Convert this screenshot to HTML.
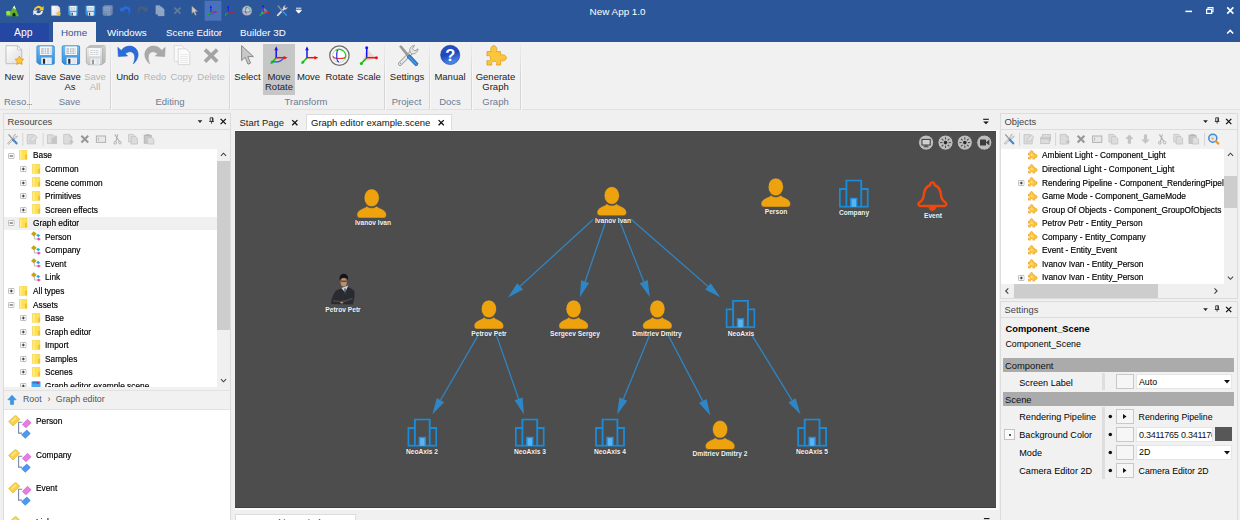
<!DOCTYPE html><html><head><meta charset="utf-8"><title>New App 1.0</title><style>
*{box-sizing:border-box;margin:0;padding:0}
html,body{width:1240px;height:520px;overflow:hidden;background:#f0f0f0;font-family:"Liberation Sans",sans-serif;font-size:9.6px;color:#1e1e1e}
.a{position:absolute}
.t{position:absolute;white-space:pre;line-height:1}
#title{left:0;top:0;width:1240px;height:42px;background:#2b579a}
#ribbon{left:0;top:42px;width:1240px;height:68px;background:#f1f1f1;border-bottom:1px solid #e2e2e2}
.rt{position:absolute;top:28px;color:#fff;font-size:9.8px;white-space:pre;line-height:1}
.rb{position:absolute;font-size:9.5px;color:#222;text-align:center;white-space:pre;line-height:10.2px;top:71.7px;transform:translateX(-50%)}
.rb.d{color:#b4b4b4}
.rg{position:absolute;font-size:9.5px;color:#6a7b94;white-space:pre;line-height:1;top:96.5px;transform:translateX(-50%)}
.sep{position:absolute;top:44px;height:66px;width:2.2px;background:linear-gradient(90deg,#d4d6d9 0,#d4d6d9 55%,#f8f8f8 55%);-webkit-mask-image:linear-gradient(180deg,rgba(0,0,0,0.15) 0,#000 45%);mask-image:linear-gradient(180deg,rgba(0,0,0,0.15) 0,#000 45%)}
.panel{position:absolute;background:#f1f1f1;border:1px solid #dcdcdc}
.ph{position:absolute;left:0;top:0;right:0;height:16px;border-bottom:1px solid #dcdcdc;background:#f1f1f1}
.ph .t{left:3.5px;top:2.9px;font-size:9.4px;color:#444}
.tree{position:absolute;background:#fff}
.tr{position:absolute;font-size:9px;white-space:pre;line-height:1;color:#000;-webkit-text-stroke:0.18px #000;transform:scaleX(0.922);transform-origin:0 0}
.pl{position:absolute;font-size:9px;white-space:pre;line-height:1;color:#111}
.nl{position:absolute;font-size:7.25px;color:#f4f4f4;white-space:pre;line-height:1;transform:translateX(-50%) scaleX(0.915);font-weight:bold;text-shadow:0 0 1.2px #333}
svg{position:absolute;overflow:visible}
</style></head><body>
<svg width="0" height="0" style="position:absolute"><defs>
<symbol id="person" viewBox="0 0 30 29.5"><path d="M0.2 26.2 C0.2 22.4 4.4 20.4 8.2 18.9 Q9.5 18.4 9.9 17.2 C12.4 19.8 17.6 19.8 20.1 17.2 Q20.5 18.4 21.8 18.9 C25.6 20.4 29.8 22.4 29.8 26.2 Q29.8 29.3 26.6 29.3 H3.4 Q0.2 29.3 0.2 26.2Z" fill="#eda20e" stroke="#454a58" stroke-width="0.5"/><ellipse cx="15" cy="9.1" rx="7.7" ry="9" fill="#eda20e" stroke="#454a58" stroke-width="0.7"/></symbol>
<symbol id="company" viewBox="0 0 30 28.4"><g fill="none" stroke="#1a8bd8" stroke-width="1.9"><rect x="7.6" y="1" width="14.8" height="26.4"/><path d="M7.6 9.6H1V27.4H7.6M22.4 9.6H29V27.4H22.4"/></g><rect x="11.3" y="18.4" width="7.4" height="9" fill="#2590e0"/><rect x="12.8" y="19.8" width="4.4" height="7.6" fill="#5ab4f0"/></symbol>
<symbol id="folder" viewBox="0 0 8.4 9.8"><path d="M0.3 0.3H8.1V9.5H0.3Z" fill="#ffe254" stroke="#f0c63a" stroke-width="0.5"/><path d="M1 0.8H2.6V9H1Z" fill="#ffee8c"/><path d="M6 5.3L8.1 4.3V9.5H6Z" fill="#f2c12e"/></symbol>
<symbol id="plus" viewBox="0 0 6.6 6"><rect x="0.4" y="0.4" width="5.8" height="5.2" rx="1" fill="#fff" stroke="#a4a4a4" stroke-width="0.8"/><path d="M1.8 3H4.8M3.3 1.6V4.4" stroke="#222" stroke-width="0.9"/></symbol>
<symbol id="minus" viewBox="0 0 6.6 6"><rect x="0.4" y="0.4" width="5.8" height="5.2" rx="1" fill="#fff" stroke="#a4a4a4" stroke-width="0.8"/><path d="M1.7 3H4.9" stroke="#222" stroke-width="0.9"/></symbol>
<symbol id="ctype" viewBox="0 0 10 10"><path d="M3.4 4.6V8H6" fill="none" stroke="#a0a0a8" stroke-width="0.7"/><path d="M0 3L2.7 0.2L5.7 2.7L3 5.6Z" fill="#c9a214"/><path d="M5.2 4.6L7 2.8L9.2 4.4L7.4 6.2Z" fill="#22aee6"/><path d="M5.7 8.1L7.6 6.5L9.8 8L7.8 9.7Z" fill="#e64cb0"/></symbol>
<symbol id="ctypeL" viewBox="0 0 24 24"><path d="M10.2 7.3H14.3M10.6 7.3V18.1H14" fill="none" stroke="#7888a8" stroke-width="1.1"/><path d="M0.65 6.4L7.6 0.2L11.9 4.3L5 11Z" fill="#f8d242" stroke="#dcaa24" stroke-width="0.6"/><path d="M3 6.2L7.4 2.2L8.6 3.4L4.2 7.4Z" fill="#fce68a"/><path d="M14.3 9.5L19.5 4.3L23.1 7.7L18 12.7Z" fill="#e97ce2" stroke="#cc54c4" stroke-width="0.6"/><path d="M13.6 19.8L18.8 15.1L22.3 18.5L17.3 23.3Z" fill="#4a9af2" stroke="#2c78d8" stroke-width="0.6"/></symbol>
<symbol id="star" viewBox="486 44.8 21 20.8"><path d="M487 51.6H491.4C490.2 50.2 490.4 46.2 493.8 45.6C497.2 46.2 497.4 50.2 496.2 51.6H500.6V55.4C502 54.2 506 54.4 506.4 57.8C506 61.2 502 61.4 500.6 60.2V65H496.4C497.4 63.6 496.8 61.2 494.2 61.2C491.6 61.2 491 63.6 492 65H487V60.4C488.4 61.4 490.6 60.8 490.6 58.2C490.6 55.6 488.4 55 487 56Z" fill="#ffcb30" stroke="#e8a23c" stroke-width="1.8" stroke-linejoin="round"/><circle cx="494" cy="55.5" r="2.6" fill="#ffe070"/></symbol>
</defs></svg>
<div class="a" id="title"></div>
<div class="a" style="left:0;top:22.6px;width:49px;height:19.4px;background:#2347a3"></div>
<div class="a" style="left:53px;top:22px;width:43px;height:21px;background:#f1f1f1"></div>
<div class="t" style="left:589.6px;top:7px;font-size:9.9px;color:#fff">New App 1.0</div>
<div class="rt" style="left:14px;color:#fff;font-size:10.4px;top:28px">App</div>
<div class="rt" style="left:61px;color:#2b579a">Home</div>
<div class="rt" style="left:107px;color:#fff">Windows</div>
<div class="rt" style="left:166px;color:#fff">Scene Editor</div>
<div class="rt" style="left:240px;color:#fff">Builder 3D</div>
<div class="a" id="ribbon"></div>
<div class="a" style="left:263px;top:44px;width:32px;height:51px;background:#c6c6c6"></div>
<div class="sep" style="left:29.3px"></div>
<div class="sep" style="left:110px"></div>
<div class="sep" style="left:229.3px"></div>
<div class="sep" style="left:384.3px"></div>
<div class="sep" style="left:429px"></div>
<div class="sep" style="left:471px"></div>
<div class="sep" style="left:520px"></div>
<div class="rb" style="left:14px">New</div>
<div class="rb" style="left:45.5px">Save</div>
<div class="rb" style="left:70px">Save
As</div>
<div class="rb d" style="left:95px">Save
All</div>
<div class="rb" style="left:127.5px">Undo</div>
<div class="rb d" style="left:155px">Redo</div>
<div class="rb d" style="left:181.5px">Copy</div>
<div class="rb d" style="left:211px">Delete</div>
<div class="rb" style="left:247.5px">Select</div>
<div class="rb" style="left:279px">Move
Rotate</div>
<div class="rb" style="left:308.5px">Move</div>
<div class="rb" style="left:339.5px">Rotate</div>
<div class="rb" style="left:369px">Scale</div>
<div class="rb" style="left:407px">Settings</div>
<div class="rb" style="left:450px">Manual</div>
<div class="rb" style="left:495.5px">Generate
Graph</div>
<div class="rg" style="left:4px;transform:none">Reso<span style="letter-spacing:-0.9px">...</span></div>
<div class="rg" style="left:69.5px">Save</div>
<div class="rg" style="left:170px">Editing</div>
<div class="rg" style="left:306px">Transform</div>
<div class="rg" style="left:406.5px">Project</div>
<div class="rg" style="left:450px">Docs</div>
<div class="rg" style="left:495.5px">Graph</div>
<div class="panel" style="left:3px;top:113px;width:228px;height:410px"><div class="ph"><div class="t">Resources</div></div></div>
<div class="tree" style="left:4px;top:148.5px;width:226px;height:238.5px"></div>
<div class="a" style="left:4px;top:216.5px;width:213px;height:13.5px;background:#f0f0f0"></div>
<div class="a" style="left:217px;top:148.5px;width:13px;height:238.5px;background:#f0f0f0"></div>
<div class="a" style="left:217px;top:161px;width:13px;height:169px;background:#cdcdcd"></div>
<div class="a" style="left:4px;top:148px;width:213px;height:239px;overflow:hidden">
<svg style="left:4.1px;top:4.5px" width="6.6" height="6"><use href="#minus"/></svg>
<svg style="left:15.3px;top:2.0999999999999996px" width="8.4" height="9.8"><use href="#folder"/></svg>
<div class="tr" style="left:29.1px;top:3.4000000000000004px">Base</div>
<svg style="left:16.35px;top:18.060000000000002px" width="6.6" height="6"><use href="#plus"/></svg>
<svg style="left:27.55px;top:15.660000000000002px" width="8.4" height="9.8"><use href="#folder"/></svg>
<div class="tr" style="left:41.35px;top:16.96px">Common</div>
<svg style="left:16.35px;top:31.620000000000005px" width="6.6" height="6"><use href="#plus"/></svg>
<svg style="left:27.55px;top:29.220000000000006px" width="8.4" height="9.8"><use href="#folder"/></svg>
<div class="tr" style="left:41.35px;top:30.520000000000003px">Scene common</div>
<svg style="left:16.35px;top:45.18000000000001px" width="6.6" height="6"><use href="#plus"/></svg>
<svg style="left:27.55px;top:42.78000000000001px" width="8.4" height="9.8"><use href="#folder"/></svg>
<div class="tr" style="left:41.35px;top:44.080000000000005px">Primitives</div>
<svg style="left:16.35px;top:58.74000000000001px" width="6.6" height="6"><use href="#plus"/></svg>
<svg style="left:27.55px;top:56.34000000000001px" width="8.4" height="9.8"><use href="#folder"/></svg>
<div class="tr" style="left:41.35px;top:57.64000000000001px">Screen effects</div>
<svg style="left:4.1px;top:72.30000000000001px" width="6.6" height="6"><use href="#minus"/></svg>
<svg style="left:15.3px;top:69.9px" width="8.4" height="9.8"><use href="#folder"/></svg>
<div class="tr" style="left:29.1px;top:71.20000000000002px">Graph editor</div>
<svg style="left:27.05px;top:83.26000000000002px" width="10" height="10"><use href="#ctype"/></svg>
<div class="tr" style="left:41.35px;top:84.76000000000002px">Person</div>
<svg style="left:27.05px;top:96.82000000000002px" width="10" height="10"><use href="#ctype"/></svg>
<div class="tr" style="left:41.35px;top:98.32000000000002px">Company</div>
<svg style="left:27.05px;top:110.38000000000002px" width="10" height="10"><use href="#ctype"/></svg>
<div class="tr" style="left:41.35px;top:111.88000000000002px">Event</div>
<svg style="left:27.05px;top:123.94000000000003px" width="10" height="10"><use href="#ctype"/></svg>
<div class="tr" style="left:41.35px;top:125.44000000000003px">Link</div>
<svg style="left:4.1px;top:140.10000000000002px" width="6.6" height="6"><use href="#plus"/></svg>
<svg style="left:15.3px;top:137.70000000000002px" width="8.4" height="9.8"><use href="#folder"/></svg>
<div class="tr" style="left:29.1px;top:139.00000000000003px">All types</div>
<svg style="left:4.1px;top:153.65999999999997px" width="6.6" height="6"><use href="#minus"/></svg>
<svg style="left:15.3px;top:151.25999999999996px" width="8.4" height="9.8"><use href="#folder"/></svg>
<div class="tr" style="left:29.1px;top:152.55999999999997px">Assets</div>
<svg style="left:16.35px;top:167.22000000000003px" width="6.6" height="6"><use href="#plus"/></svg>
<svg style="left:27.55px;top:164.82000000000002px" width="8.4" height="9.8"><use href="#folder"/></svg>
<div class="tr" style="left:41.35px;top:166.12000000000003px">Base</div>
<svg style="left:16.35px;top:180.77999999999997px" width="6.6" height="6"><use href="#plus"/></svg>
<svg style="left:27.55px;top:178.37999999999997px" width="8.4" height="9.8"><use href="#folder"/></svg>
<div class="tr" style="left:41.35px;top:179.67999999999998px">Graph editor</div>
<svg style="left:16.35px;top:194.34000000000003px" width="6.6" height="6"><use href="#plus"/></svg>
<svg style="left:27.55px;top:191.94000000000003px" width="8.4" height="9.8"><use href="#folder"/></svg>
<div class="tr" style="left:41.35px;top:193.24000000000004px">Import</div>
<svg style="left:16.35px;top:207.89999999999998px" width="6.6" height="6"><use href="#plus"/></svg>
<svg style="left:27.55px;top:205.49999999999997px" width="8.4" height="9.8"><use href="#folder"/></svg>
<div class="tr" style="left:41.35px;top:206.79999999999998px">Samples</div>
<svg style="left:16.35px;top:221.46000000000004px" width="6.6" height="6"><use href="#plus"/></svg>
<svg style="left:27.55px;top:219.06000000000003px" width="8.4" height="9.8"><use href="#folder"/></svg>
<div class="tr" style="left:41.35px;top:220.36000000000004px">Scenes</div>
<svg style="left:16.35px;top:235.01999999999998px" width="6.6" height="6"><use href="#plus"/></svg>
<svg style="left:27.05px;top:233.01999999999998px" width="10" height="10"><rect x="0.5" y="0.5" width="9" height="8.5" fill="#4aa8f0"/><rect x="1.5" y="0.5" width="7" height="2" fill="#2a78d0"/><rect x="6" y="1" width="2" height="2" fill="#e03030"/></svg>
<div class="tr" style="left:41.35px;top:233.92px">Graph editor example.scene</div>
</div>
<div class="a" style="left:4px;top:390px;width:226px;height:20px;background:#f1f1f1;border-top:1px solid #e2e2e2;border-bottom:1px solid #e2e2e2"></div>
<div class="t" style="left:23px;top:395.4px;font-size:8.8px;color:#555">Root</div><div class="t" style="left:47.5px;top:395.4px;font-size:8.8px;color:#555">›</div><div class="t" style="left:55.8px;top:395.4px;font-size:8.8px;color:#555">Graph editor</div>
<div class="a" style="left:4px;top:410px;width:226px;height:110px;background:#fff"></div>
<svg style="left:8px;top:415.0px" width="24" height="24"><use href="#ctypeL"/></svg>
<div class="tr" style="left:36.3px;top:416.9px">Person</div>
<svg style="left:8px;top:448.6px" width="24" height="24"><use href="#ctypeL"/></svg>
<div class="tr" style="left:36.3px;top:450.5px">Company</div>
<svg style="left:8px;top:482.2px" width="24" height="24"><use href="#ctypeL"/></svg>
<div class="tr" style="left:36.3px;top:484.09999999999997px">Event</div>
<svg style="left:8px;top:515.8px" width="24" height="24"><use href="#ctypeL"/></svg>
<div class="tr" style="left:36.3px;top:517.6999999999999px">Link</div>
<div class="a" style="left:306px;top:114px;width:146px;height:17px;background:#fff;border:1px solid #dcdcdc;border-bottom:none"></div>
<div class="t" style="left:239.6px;top:118.4px;font-size:9.4px;color:#222">Start Page</div>
<div class="t" style="left:311px;top:118.4px;font-size:9.5px;color:#111">Graph editor example.scene</div>
<div class="a" style="left:235px;top:130px;width:764px;height:379.5px;background:#fbfbfb"></div>
<div class="a" id="canvas" style="left:235px;top:131px;width:761px;height:377px;background:#4d4d4d"></div>
<div class="a" style="left:235px;top:513.5px;width:121px;height:10px;background:#fff;border:1px solid #dcdcdc"></div>
<div class="t" style="left:239.6px;top:517.8px;font-size:9.6px;color:#111">New Docking Window M...</div>
<div class="panel" style="left:1000px;top:113px;width:238px;height:186px"><div class="ph"><div class="t">Objects</div></div></div>
<div class="tree" style="left:1001px;top:148.5px;width:236px;height:135.5px"></div>
<div class="a" style="left:1224px;top:148.5px;width:13px;height:135.5px;background:#f0f0f0"></div>
<div class="a" style="left:1224px;top:176px;width:13px;height:32px;background:#cdcdcd"></div>
<div class="a" style="left:1001px;top:284px;width:236px;height:14px;background:#f0f0f0"></div>
<div class="a" style="left:1013.5px;top:284px;width:144.5px;height:14px;background:#cdcdcd"></div>
<div class="a" style="left:1001px;top:148px;width:223px;height:136px;overflow:hidden">
<svg style="left:27px;top:2.0999999999999996px" width="9.6" height="9.6"><use href="#star"/></svg>
<div class="tr" style="left:41px;top:3.4000000000000004px">Ambient Light - Component_Light</div>
<svg style="left:27px;top:15.660000000000002px" width="9.6" height="9.6"><use href="#star"/></svg>
<div class="tr" style="left:41px;top:16.96px">Directional Light - Component_Light</div>
<svg style="left:17.2px;top:31.620000000000005px" width="6.6" height="6"><use href="#plus"/></svg>
<svg style="left:27px;top:29.220000000000006px" width="9.6" height="9.6"><use href="#star"/></svg>
<div class="tr" style="left:41px;top:30.520000000000003px">Rendering Pipeline - Component_RenderingPipeline</div>
<svg style="left:27px;top:42.78000000000001px" width="9.6" height="9.6"><use href="#star"/></svg>
<div class="tr" style="left:41px;top:44.080000000000005px">Game Mode - Component_GameMode</div>
<svg style="left:27px;top:56.34000000000001px" width="9.6" height="9.6"><use href="#star"/></svg>
<div class="tr" style="left:41px;top:57.64000000000001px">Group Of Objects - Component_GroupOfObjects</div>
<svg style="left:27px;top:69.9px" width="9.6" height="9.6"><use href="#star"/></svg>
<div class="tr" style="left:41px;top:71.20000000000002px">Petrov Petr - Entity_Person</div>
<svg style="left:27px;top:83.46000000000001px" width="9.6" height="9.6"><use href="#star"/></svg>
<div class="tr" style="left:41px;top:84.76000000000002px">Company - Entity_Company</div>
<svg style="left:27px;top:97.02000000000001px" width="9.6" height="9.6"><use href="#star"/></svg>
<div class="tr" style="left:41px;top:98.32000000000002px">Event - Entity_Event</div>
<svg style="left:27px;top:110.58000000000001px" width="9.6" height="9.6"><use href="#star"/></svg>
<div class="tr" style="left:41px;top:111.88000000000002px">Ivanov Ivan - Entity_Person</div>
<svg style="left:17.2px;top:126.54000000000002px" width="6.6" height="6"><use href="#plus"/></svg>
<svg style="left:27px;top:124.14000000000001px" width="9.6" height="9.6"><use href="#star"/></svg>
<div class="tr" style="left:41px;top:125.44000000000003px">Ivanov Ivan - Entity_Person</div>
</div>
<div class="panel" style="left:1000px;top:301px;width:238px;height:222px"><div class="ph"><div class="t">Settings</div></div></div>
<div class="t" style="left:1005.5px;top:325px;font-size:9.3px;font-weight:bold;color:#000">Component_Scene</div>
<div class="t" style="left:1005.5px;top:340.3px;font-size:8.8px;color:#000">Component_Scene</div>
<div class="a" style="left:1003px;top:358px;width:231px;height:13.5px;background:#ababab"></div>
<div class="t" style="left:1005px;top:360.5px;font-size:9.4px;color:#111">Component</div>
<div class="a" style="left:1003px;top:392px;width:231px;height:13.5px;background:#ababab"></div>
<div class="t" style="left:1005px;top:394.5px;font-size:9.4px;color:#111">Scene</div>
<div class="a" style="left:1102px;top:373px;width:3px;height:17px;background:#dedede"></div>
<div class="a" style="left:1102px;top:407px;width:3px;height:72px;background:#dedede"></div>
<div class="t" style="left:1019.3px;top:378.7px;font-size:9.1px;color:#000">Screen Label</div>
<div class="a" style="left:1116px;top:374.0px;width:18px;height:15px;background:#f6f6f6;border:1px solid #c8c8c8"></div>
<div class="a" style="left:1136px;top:374.0px;width:96px;height:15px;background:#fff;border:1px solid #e6e6e6"></div>
<div class="t" style="left:1139px;top:377.7px;font-size:8.8px;color:#000">Auto</div>
<svg style="left:1224px;top:380.0px" width="6" height="4"><path d="M0 0H6L3 3.4Z" fill="#111"/></svg>
<div class="t" style="left:1019.3px;top:412.9px;font-size:9.1px;color:#000">Rendering Pipeline</div>
<svg style="left:1106px;top:412.5px" width="8" height="8"><circle cx="4.3" cy="3.4" r="1.75" fill="#111"/></svg>
<div class="a" style="left:1116px;top:409.0px;width:18px;height:15px;background:#f6f6f6;border:1px solid #c8c8c8"></div>
<svg style="left:1123px;top:414.0px" width="4" height="5"><path d="M0 0L3.5 2.5L0 5Z" fill="#111"/></svg>
<div class="t" style="left:1138.6px;top:413.0px;font-size:8.75px;color:#000">Rendering Pipeline</div>
<div class="t" style="left:1019.3px;top:431.09999999999997px;font-size:9.1px;color:#000">Background Color</div>
<svg style="left:1106px;top:430.7px" width="8" height="8"><circle cx="4.3" cy="3.4" r="1.75" fill="#111"/></svg>
<div class="a" style="left:1004px;top:429.2px;width:11px;height:11px;background:#fafafa;border:1px solid #c4c4c4"></div><div class="a" style="left:1008.7px;top:433.9px;width:2px;height:2px;border-radius:1px;background:#222"></div>
<div class="a" style="left:1116px;top:427.2px;width:18px;height:15px;background:#f6f6f6;border:1px solid #c8c8c8"></div>
<div class="a" style="left:1136px;top:427.2px;width:77px;height:15px;background:#fff;border:1px solid #e6e6e6;overflow:hidden"><div class="t" style="left:2px;top:2.5px;font-size:9px;color:#111;letter-spacing:-0.25px">0.3411765 0.3411765 0.3411765</div></div>
<div class="a" style="left:1215px;top:427.2px;width:17px;height:14px;background:#575757"></div>
<div class="t" style="left:1019.3px;top:449.2px;font-size:9.1px;color:#000">Mode</div>
<svg style="left:1106px;top:448.8px" width="8" height="8"><circle cx="4.3" cy="3.4" r="1.75" fill="#111"/></svg>
<div class="a" style="left:1116px;top:445.3px;width:18px;height:15px;background:#f6f6f6;border:1px solid #c8c8c8"></div>
<div class="a" style="left:1136px;top:445.3px;width:96px;height:15px;background:#fff;border:1px solid #e6e6e6"></div>
<div class="t" style="left:1139px;top:448.2px;font-size:8.8px;color:#000">2D</div>
<svg style="left:1224px;top:451.3px" width="6" height="4"><path d="M0 0H6L3 3.4Z" fill="#111"/></svg>
<div class="t" style="left:1019.3px;top:466.9px;font-size:9.1px;color:#000">Camera Editor 2D</div>
<svg style="left:1106px;top:466.5px" width="8" height="8"><circle cx="4.3" cy="3.4" r="1.75" fill="#111"/></svg>
<div class="a" style="left:1116px;top:463.0px;width:18px;height:15px;background:#f6f6f6;border:1px solid #c8c8c8"></div>
<svg style="left:1123px;top:468.0px" width="4" height="5"><path d="M0 0L3.5 2.5L0 5Z" fill="#111"/></svg>
<div class="t" style="left:1138.6px;top:467.0px;font-size:8.75px;color:#000">Camera Editor 2D</div>
<svg style="left:0;top:0" width="1240" height="520" viewBox="0 0 1240 520"><defs>
<linearGradient id="fgb" x1="0" y1="0" x2="0" y2="1"><stop offset="0" stop-color="#78bef2"/><stop offset="1" stop-color="#2e8cda"/></linearGradient>
<linearGradient id="fgg" x1="0" y1="0" x2="0" y2="1"><stop offset="0" stop-color="#ececec"/><stop offset="1" stop-color="#c6c6c6"/></linearGradient>
<linearGradient id="pg" x1="0" y1="0" x2="1" y2="1"><stop offset="0" stop-color="#ffffff"/><stop offset="1" stop-color="#dcdcdc"/></linearGradient>
<linearGradient id="hg" x1="0" y1="0" x2="0.3" y2="1"><stop offset="0" stop-color="#2a52c4"/><stop offset="0.55" stop-color="#1f48bc"/><stop offset="1" stop-color="#4a8ae8"/></linearGradient>
</defs>
<g id="i-new">
<path d="M6 45.7H17.6L21.8 49.9V63.7H6Z" fill="url(#pg)" stroke="#b4b4b4" stroke-width="0.8"/><path d="M17.6 45.7V49.9H21.8Z" fill="#fafafa" stroke="#b4b4b4" stroke-width="0.7"/>
<path d="M19.40 56.10L20.75 58.84L23.77 59.28L21.59 61.41L22.10 64.42L19.40 63.00L16.70 64.42L17.21 61.41L15.03 59.28L18.05 58.84Z" fill="#fbc935" stroke="#e79a1c" stroke-width="0.8" stroke-linejoin="round"/>
</g>
<g id="i-save"><g transform="translate(36.5,45.4) scale(1.0)"><path d="M1.6 0.4 H16.6 Q17.8 0.4 17.8 1.6 V17.6 Q17.8 18.8 16.6 18.8 H2.4 L0.4 16.8 V1.6 Q0.4 0.4 1.6 0.4Z" fill="url(#fgb)" stroke="#2a80cc" stroke-width="0.8"/><rect x="3.4" y="1" width="11.8" height="8.6" fill="#f6f9fc"/><path d="M4.6 3.6H14M4.6 5.7H14M4.6 7.8H14" stroke="#707880" stroke-width="0.7" stroke-dasharray="2.6 0.9 1.7 0.7 2.2 0.8"/><rect x="4.8" y="12.2" width="10.4" height="6.4" fill="#eef2f6"/><rect x="6.4" y="13.4" width="2.2" height="5" fill="#2a2a2a"/><rect x="10.6" y="13" width="3.4" height="5.4" fill="#dfe6ee"/></g></g>
<g transform="translate(61.8,45.4) scale(1.0)"><path d="M1.6 0.4 H16.6 Q17.8 0.4 17.8 1.6 V17.6 Q17.8 18.8 16.6 18.8 H2.4 L0.4 16.8 V1.6 Q0.4 0.4 1.6 0.4Z" fill="url(#fgb)" stroke="#2a80cc" stroke-width="0.8"/><rect x="3.4" y="1" width="11.8" height="8.6" fill="#f6f9fc"/><path d="M4.6 3.6H14M4.6 5.7H14M4.6 7.8H14" stroke="#707880" stroke-width="0.7" stroke-dasharray="2.6 0.9 1.7 0.7 2.2 0.8"/><rect x="4.8" y="12.2" width="10.4" height="6.4" fill="#eef2f6"/><rect x="6.4" y="13.4" width="2.2" height="5" fill="#2a2a2a"/><rect x="10.6" y="13" width="3.4" height="5.4" fill="#dfe6ee"/></g>
<g id="i-saveall"><g transform="translate(88.6,45.2) scale(0.93)"><path d="M1.6 0.4 H16.6 Q17.8 0.4 17.8 1.6 V17.6 Q17.8 18.8 16.6 18.8 H2.4 L0.4 16.8 V1.6 Q0.4 0.4 1.6 0.4Z" fill="url(#fgg)" stroke="#a8a8a8" stroke-width="0.8"/><rect x="3.4" y="1" width="11.8" height="8.6" fill="#f6f9fc"/><path d="M4.6 3.6H14M4.6 5.7H14M4.6 7.8H14" stroke="#b8b8b8" stroke-width="0.7" stroke-dasharray="2.6 0.9 1.7 0.7 2.2 0.8"/><rect x="4.8" y="12.2" width="10.4" height="6.4" fill="#eef2f6"/><rect x="6.4" y="13.4" width="2.2" height="5" fill="#9a9a9a"/><rect x="10.6" y="13" width="3.4" height="5.4" fill="#dfe6ee"/></g><g transform="translate(87.3,46.2) scale(0.93)"><path d="M1.6 0.4 H16.6 Q17.8 0.4 17.8 1.6 V17.6 Q17.8 18.8 16.6 18.8 H2.4 L0.4 16.8 V1.6 Q0.4 0.4 1.6 0.4Z" fill="url(#fgg)" stroke="#a8a8a8" stroke-width="0.8"/><rect x="3.4" y="1" width="11.8" height="8.6" fill="#f6f9fc"/><path d="M4.6 3.6H14M4.6 5.7H14M4.6 7.8H14" stroke="#b8b8b8" stroke-width="0.7" stroke-dasharray="2.6 0.9 1.7 0.7 2.2 0.8"/><rect x="4.8" y="12.2" width="10.4" height="6.4" fill="#eef2f6"/><rect x="6.4" y="13.4" width="2.2" height="5" fill="#9a9a9a"/><rect x="10.6" y="13" width="3.4" height="5.4" fill="#dfe6ee"/></g><g transform="translate(86,47.2) scale(0.93)"><path d="M1.6 0.4 H16.6 Q17.8 0.4 17.8 1.6 V17.6 Q17.8 18.8 16.6 18.8 H2.4 L0.4 16.8 V1.6 Q0.4 0.4 1.6 0.4Z" fill="url(#fgg)" stroke="#a8a8a8" stroke-width="0.8"/><rect x="3.4" y="1" width="11.8" height="8.6" fill="#f6f9fc"/><path d="M4.6 3.6H14M4.6 5.7H14M4.6 7.8H14" stroke="#b8b8b8" stroke-width="0.7" stroke-dasharray="2.6 0.9 1.7 0.7 2.2 0.8"/><rect x="4.8" y="12.2" width="10.4" height="6.4" fill="#eef2f6"/><rect x="6.4" y="13.4" width="2.2" height="5" fill="#9a9a9a"/><rect x="10.6" y="13" width="3.4" height="5.4" fill="#dfe6ee"/></g></g>
<path id="i-undo" d="M117.8 47.3L121.2 50.4C124 46.6 129 45.3 132.6 46.6C137.2 48.4 139.2 53.2 137.6 57.8C136.7 60.4 135.1 62.4 133.3 63.9C134.7 60.6 135.1 57.6 134.4 55.1C133.4 51.6 129.4 50.4 125.4 53.8L127.6 56L118.3 56.6Z" fill="#2c6cd8" stroke="#2458c0" stroke-width="0.5"/>
<path d="M117.8 47.3L121.2 50.4C124 46.6 129 45.3 132.6 46.6C137.2 48.4 139.2 53.2 137.6 57.8C136.7 60.4 135.1 62.4 133.3 63.9C134.7 60.6 135.1 57.6 134.4 55.1C133.4 51.6 129.4 50.4 125.4 53.8L127.6 56L118.3 56.6Z" fill="#a9a9a9" stroke="#9a9a9a" stroke-width="0.5" transform="translate(283,0) scale(-1,1)"/>
<g id="i-copy">
<path d="M174.3 45.6H181.6L185.4 49.2V61.4H174.3Z" fill="#fafafa" stroke="#d4d4d4" stroke-width="0.8"/>
<path d="M178.2 48.8H185.8L189.8 52.6V64.6H178.2Z" fill="#fbfbfb" stroke="#d0d0d0" stroke-width="0.8"/><path d="M180 54.5H188M180 56.5H188M180 58.5H188M180 60.5H188M180 62.5H188" stroke="#e2e2e2" stroke-width="0.7"/>
</g>
<path id="i-del" d="M205 49.6L217.2 61.6M217.2 49.6L205 61.6" stroke="#a4a4a4" stroke-width="3.6"/>
<path id="i-sel" d="M241.6 45.6V60.6L245.2 57.4L248 64.2L250.6 63.1L247.8 56.6H253.4Z" fill="#c8c8c8" stroke="#808080" stroke-width="0.9" stroke-linejoin="round"/>
<g id="i-mr"><path d="M276.2 57.7L271.5 62.8" stroke="#0cc00c" stroke-width="1.5"/><path d="M276.2 58.1V48.7" stroke="#1414f0" stroke-width="1.5"/><path d="M275.8 57.7H285.2" stroke="#f01010" stroke-width="1.5"/><path d="M276.2 46.300000000000004L278.0 50.300000000000004H274.4Z" fill="#1414f0"/><path d="M287.59999999999997 57.7L283.59999999999997 55.900000000000006V59.5Z" fill="#f01010"/><path d="M270.3 64.1L271.2 60.5L273.9 63.0Z" fill="#0cc00c"/><path d="M272.8 61.5Q279.2 63.300000000000004 283.4 58.300000000000004" stroke="#2a50e8" stroke-width="1.2" fill="none"/></g>
<g id="i-mv"><path d="M307 57.7L302.3 62.8" stroke="#0cc00c" stroke-width="1.5"/><path d="M307 58.1V48.7" stroke="#1414f0" stroke-width="1.5"/><path d="M306.6 57.7H316" stroke="#f01010" stroke-width="1.5"/><path d="M307 46.300000000000004L308.8 50.300000000000004H305.2Z" fill="#1414f0"/><path d="M318.4 57.7L314.4 55.900000000000006V59.5Z" fill="#f01010"/><path d="M301.1 64.1L302.0 60.5L304.7 63.0Z" fill="#0cc00c"/></g>
<g id="i-rot">
<circle cx="339.4" cy="55.6" r="9.7" fill="#f7f7f7" stroke="#6e6e6e" stroke-width="1.3"/><circle cx="339.4" cy="55.6" r="6.7" fill="#fff" stroke="#9a9a9a" stroke-width="0.5"/>
<path d="M333.09999999999997 56.2A6.3 2.3 0 0 0 345.7 56.2" fill="none" stroke="#f03030" stroke-width="1.2"/>
<path d="M339.0 49.300000000000004A2.3 6.3 0 0 0 339.0 61.9" fill="none" stroke="#3030f0" stroke-width="1.2"/>
<path d="M335.59999999999997 50.6A6.3 6.3 0 0 1 344.59999999999997 59.0" fill="none" stroke="#20d020" stroke-width="1.2"/>
</g>
<g id="i-sc"><path d="M366.7 48.7L375.7 57.7L362.09999999999997 62.7Z" fill="#f0b0b0" opacity="0.45"/><path d="M366.7 57.7L362.0 62.8" stroke="#0cc00c" stroke-width="1.5"/><path d="M366.7 58.1V48.7" stroke="#1414f0" stroke-width="1.5"/><path d="M366.3 57.7H375.7" stroke="#f01010" stroke-width="1.5"/><circle cx="366.7" cy="47.7" r="1.5" fill="#1414f0"/><circle cx="376.4" cy="57.7" r="1.5" fill="#f01010"/><circle cx="361.4" cy="63.5" r="1.5" fill="#0cc00c"/></g>
<g id="i-set">
<path d="M400 63.8L411.4 52.4" stroke="#8c8c8c" stroke-width="4" stroke-linecap="round"/><path d="M400 63.8L411.4 52.4" stroke="#e9e9e9" stroke-width="2.6" stroke-linecap="round"/>
<path d="M410.2 52.2C408.8 49 411 45.6 414.6 45.4L412.4 48.6L414.8 51L418 48.8C417.8 52.4 414.4 54.6 411.6 53.6Z" fill="#e6e6e6" stroke="#8c8c8c" stroke-width="0.8" stroke-linejoin="round"/>
<circle cx="400.6" cy="63.2" r="0.8" fill="#a0a0a0"/>
<path d="M399.4 46.6L401.2 45.6L409.4 55.2L407.6 56.8Z" fill="#9a9a9a" stroke="#7c7c7c" stroke-width="0.4"/><path d="M407 57L409.8 54.6L417.8 63.2Q418.2 65.8 415.4 65.8Z" fill="#2e7fd2" stroke="#1b58a6" stroke-width="0.6"/><path d="M408.6 56.4L416.4 64.6" stroke="#6ab0ee" stroke-width="0.8"/>
</g>
<circle cx="450.2" cy="54.9" r="9.6" fill="url(#hg)" stroke="#1a3ea0" stroke-width="0.6"/><text x="450.3" y="60.9" font-family="Liberation Sans, sans-serif" font-weight="bold" font-size="16.5" fill="#fff" text-anchor="middle">?</text>
<path d="M487 51.6H491.4C490.2 50.2 490.4 46.2 493.8 45.6C497.2 46.2 497.4 50.2 496.2 51.6H500.6V55.4C502 54.2 506 54.4 506.4 57.8C506 61.2 502 61.4 500.6 60.2V65H496.4C497.4 63.6 496.8 61.2 494.2 61.2C491.6 61.2 491 63.6 492 65H487V60.4C488.4 61.4 490.6 60.8 490.6 58.2C490.6 55.6 488.4 55 487 56Z" fill="#fac63c" stroke="#e29a22" stroke-width="0.8" stroke-linejoin="round"/>
<rect x="204.6" y="0.8" width="16.8" height="20" fill="#4a72b8"/>
<path d="M5.6 16.3L11.2 10.4L14.4 5.6L19 16.3Z" fill="#5cb424"/><path d="M12.6 8.2L14.4 5.6L16 9.4L14.4 8.6Z" fill="#f4f8f4"/><circle cx="8.2" cy="13" r="2.3" fill="#9be04a"/><path d="M12.4 16.3Q12.2 12.8 14 12.8Q15.6 12.8 15.6 16.3Z" fill="#1c1c1c"/>
<g transform="translate(38.4,10.6) scale(1.13) translate(-38.4,-10.6)"><path d="M34.2 10.2A4.3 4.3 0 0 1 41.6 7.8L43 6.4V10.6H38.8L40.3 9.1A2.5 2.5 0 0 0 36 10.2Z" fill="#f8c628"/><path d="M42.6 11A4.3 4.3 0 0 1 35.2 13.4L33.8 14.8V10.6H38L36.5 12.1A2.5 2.5 0 0 0 40.8 11Z" fill="#e4e8f0"/></g>
<use href="#i-new" transform="translate(48.20,-18.89) scale(0.54)" opacity="1" />
<use href="#i-save" transform="translate(48.38,-19.00) scale(0.54)" opacity="1" />
<use href="#i-save" transform="translate(65.78,-19.00) scale(0.54)" opacity="1" />
<use href="#i-saveall" transform="translate(57.88,-18.16) scale(0.52)" opacity="0.45" />
<use href="#i-undo" transform="translate(58.64,-17.85) scale(0.52)" opacity="1" />
<use href="#i-undo" transform="translate(209.16,-17.85) scale(-0.52,0.52)" opacity="0.5" style="filter:grayscale(1)"/>
<use href="#i-copy" transform="translate(61.72,-19.00) scale(0.54)" opacity="0.5" />
<use href="#i-del" transform="translate(71.90,-17.10) scale(0.5)" opacity="0.45" />
<use href="#i-sel" transform="translate(71.05,-16.80) scale(0.5)" opacity="1" />
<use href="#i-mr" transform="translate(50.67,-21.49) scale(0.58)" opacity="1" />
<use href="#i-mv" transform="translate(50.21,-21.49) scale(0.58)" opacity="1" />
<use href="#i-rot" transform="translate(70.51,-18.21) scale(0.52)" opacity="0.7" />
<use href="#i-sc" transform="translate(50.50,-21.49) scale(0.58)" opacity="1" />
<use href="#i-set" transform="translate(61.75,-19.27) scale(0.54)" opacity="1" />
<path d="M296 8.2H301.4M296 10.2H301.4L298.7 13.2Z" stroke="#fff" stroke-width="0.9" fill="#fff"/>
<path d="M1185.4 11.4H1192" stroke="#fff" stroke-width="1.5"/>
<path d="M1208 9V7.6H1213V11.6H1211.6" stroke="#fff" stroke-width="1.1" fill="none"/><rect x="1206.6" y="9.4" width="5" height="4" fill="none" stroke="#fff" stroke-width="1.2"/>
<path d="M1227.2 7.4L1233.4 13.6M1233.4 7.4L1227.2 13.6" stroke="#fff" stroke-width="1.6"/>
<path d="M1227.2 33.6L1230.2 30.4L1233.2 33.6" stroke="#fff" stroke-width="1.5" fill="none"/>
</svg>
<svg style="left:0;top:0" width="1240" height="520" viewBox="0 0 1240 520">
<use href="#i-set" transform="translate(-191.45,111.45) scale(0.5)"/>
<path d="M22.8 132.7V145.7" stroke="#d4d4d4" stroke-width="1"/>
<path d="M27.200000000000003 134.6H33.7L35.400000000000006 136.39999999999998V143.79999999999998H27.200000000000003Z" fill="#dcdcdc" stroke="#c2c2c2" stroke-width="0.8"/><path d="M29.800000000000004 141.79999999999998L30.6 138.79999999999998L34.800000000000004 135.0L37.2 137.6L33.0 141.39999999999998Z" fill="#e2e2e2" stroke="#c2c2c2" stroke-width="0.8"/>
<path d="M43.2 132.7V145.7" stroke="#d4d4d4" stroke-width="1"/>
<path d="M47.4 134.79999999999998H52.6L53.4 136.0H56.6V143.6H47.4Z" fill="#dcdcdc" stroke="#c2c2c2" stroke-width="0.8"/><path d="M51.4 138.2L56.6 136.2V143.6H51.4Z" fill="#c6c6c6"/>
<path d="M63.699999999999996 134.39999999999998H69.5L71.89999999999999 136.79999999999998V144.0H63.699999999999996Z" fill="#dcdcdc" stroke="#c2c2c2" stroke-width="0.8"/><path d="M69.5 134.39999999999998V136.79999999999998H71.89999999999999" fill="none" stroke="#c2c2c2" stroke-width="0.7"/><path d="M69.3 141.79999999999998H73.3M71.3 139.79999999999998V143.79999999999998" stroke="#c2c2c2" stroke-width="1.4"/>
<path d="M81.39999999999999 135.79999999999998L88.2 142.6M88.2 135.79999999999998L81.39999999999999 142.6" stroke="#979797" stroke-width="2.1"/>
<rect x="96.4" y="136.0" width="9.2" height="6.4" fill="#e8e8e8" stroke="#b2b2b2" stroke-width="1"/><path d="M98.4 137.79999999999998V140.6" stroke="#b2b2b2" stroke-width="0.9"/>
<path d="M114.80000000000001 134.39999999999998L119.4 141.6M117.80000000000001 134.39999999999998L115.80000000000001 141.79999999999998" stroke="#b2b2b2" stroke-width="1.1" fill="none"/><circle cx="120.0" cy="142.6" r="1.3" fill="none" stroke="#b2b2b2" stroke-width="1"/><circle cx="115.2" cy="142.79999999999998" r="1.3" fill="none" stroke="#b2b2b2" stroke-width="1"/>
<path d="M128.6 134.39999999999998H133.4L135 136.0V142.0H128.6Z" fill="#e0e0e0" stroke="#c2c2c2" stroke-width="0.8"/><path d="M131 136.6H135.6L137.4 138.39999999999998V144.0H131Z" fill="#dcdcdc" stroke="#c2c2c2" stroke-width="0.8"/>
<rect x="144.2" y="135.2" width="7" height="8" fill="#c8c8c8" stroke="#b0b0b0" stroke-width="0.8"/><rect x="146" y="134.2" width="3.4" height="1.8" fill="#b4b4b4"/><path d="M147.6 137.39999999999998H152L153.8 139.2V144.0H147.6Z" fill="#dedede" stroke="#c2c2c2" stroke-width="0.8"/>
<use href="#i-set" transform="translate(805.25,111.45) scale(0.5)"/>
<path d="M1019.6 132.7V145.7" stroke="#d4d4d4" stroke-width="1"/>
<path d="M1024 134.6H1030.5L1032.2 136.39999999999998V143.79999999999998H1024Z" fill="#dcdcdc" stroke="#c2c2c2" stroke-width="0.8"/><path d="M1026.6 141.79999999999998L1027.4 138.79999999999998L1031.6 135.0L1034 137.6L1029.8 141.39999999999998Z" fill="#e2e2e2" stroke="#c2c2c2" stroke-width="0.8"/>
<rect x="1042.5" y="134.6" width="8" height="6" fill="#e0e0e0" stroke="#c2c2c2" stroke-width="0.9"/><rect x="1040.7" y="137.2" width="8.6" height="6.4" fill="#dcdcdc" stroke="#c2c2c2" stroke-width="0.9"/><path d="M1040.7 138.79999999999998H1049.3" stroke="#c2c2c2" stroke-width="1.2"/>
<path d="M1055.6 132.7V145.7" stroke="#d4d4d4" stroke-width="1"/>
<path d="M1060.2 134.39999999999998H1066.0L1068.3999999999999 136.79999999999998V144.0H1060.2Z" fill="#dcdcdc" stroke="#c2c2c2" stroke-width="0.8"/><path d="M1066.0 134.39999999999998V136.79999999999998H1068.3999999999999" fill="none" stroke="#c2c2c2" stroke-width="0.7"/><path d="M1065.8 141.79999999999998H1069.8M1067.8 139.79999999999998V143.79999999999998" stroke="#c2c2c2" stroke-width="1.4"/>
<path d="M1077.6 135.79999999999998L1084.4 142.6M1084.4 135.79999999999998L1077.6 142.6" stroke="#979797" stroke-width="2.1"/>
<rect x="1092.6000000000001" y="136.0" width="9.2" height="6.4" fill="#e8e8e8" stroke="#b2b2b2" stroke-width="1"/><path d="M1094.6000000000001 137.79999999999998V140.6" stroke="#b2b2b2" stroke-width="0.9"/>
<path d="M1108.8999999999999 134.39999999999998H1113.7L1115.3 136.0V142.0H1108.8999999999999Z" fill="#e0e0e0" stroke="#c2c2c2" stroke-width="0.8"/><path d="M1111.3 136.6H1115.8999999999999L1117.7 138.39999999999998V144.0H1111.3Z" fill="#dcdcdc" stroke="#c2c2c2" stroke-width="0.8"/>
<path d="M1129.4 134.6L1133.6000000000001 139.0H1131.0V143.79999999999998H1127.8000000000002V139.0H1125.2Z" fill="#c4c4c4"/>
<path d="M1145.5 143.79999999999998L1149.7 139.39999999999998H1147.1V134.6H1143.9V139.39999999999998H1141.3Z" fill="#c4c4c4"/>
<path d="M1159.4 134.39999999999998L1164 141.6M1162.4 134.39999999999998L1160.4 141.79999999999998" stroke="#b2b2b2" stroke-width="1.1" fill="none"/><circle cx="1164.6" cy="142.6" r="1.3" fill="none" stroke="#b2b2b2" stroke-width="1"/><circle cx="1159.8" cy="142.79999999999998" r="1.3" fill="none" stroke="#b2b2b2" stroke-width="1"/>
<path d="M1173.8 134.39999999999998H1178.6000000000001L1180.2 136.0V142.0H1173.8Z" fill="#e0e0e0" stroke="#c2c2c2" stroke-width="0.8"/><path d="M1176.2 136.6H1180.8L1182.6000000000001 138.39999999999998V144.0H1176.2Z" fill="#dcdcdc" stroke="#c2c2c2" stroke-width="0.8"/>
<rect x="1189.0" y="135.2" width="7" height="8" fill="#c8c8c8" stroke="#b0b0b0" stroke-width="0.8"/><rect x="1190.8" y="134.2" width="3.4" height="1.8" fill="#b4b4b4"/><path d="M1192.3999999999999 137.39999999999998H1196.8L1198.6 139.2V144.0H1192.3999999999999Z" fill="#dedede" stroke="#c2c2c2" stroke-width="0.8"/>
<path d="M1204.6 132.7V145.7" stroke="#d4d4d4" stroke-width="1"/>
<circle cx="1212.8" cy="138.2" r="4" fill="#dfeaf8" stroke="#3f8ad8" stroke-width="1.5"/><path d="M1211.3999999999999 137.0L1214.2 138.79999999999998L1212.2 140.0Z" fill="#f0a030"/><path d="M1215.8 141.2L1218.3999999999999 143.6" stroke="#e89828" stroke-width="2.2" stroke-linecap="round"/>
<path d="M197.7 120.2H202.3L200 122.9Z" fill="#222"/><path d="M210.2 117.8H213.0V121.4H210.2ZM209.29999999999998 121.5H213.9M211.6 121.6V123.6" fill="none" stroke="#333" stroke-width="0.9"/><path d="M212.5 117.8V121.4" stroke="#333" stroke-width="1"/><path d="M220.6 118.9L225.79999999999998 124.1M225.79999999999998 118.9L220.6 124.1" stroke="#111" stroke-width="1.3"/>
<path d="M1203.2 120.2H1207.8L1205.5 122.9Z" fill="#222"/><path d="M1215.6999999999998 117.8H1218.5V121.4H1215.6999999999998ZM1214.8 121.5H1219.3999999999999M1217.1 121.6V123.6" fill="none" stroke="#333" stroke-width="0.9"/><path d="M1218.0 117.8V121.4" stroke="#333" stroke-width="1"/><path d="M1226.1000000000001 118.9L1231.3 124.1M1231.3 118.9L1226.1000000000001 124.1" stroke="#111" stroke-width="1.3"/>
<path d="M1203.2 308.2H1207.8L1205.5 310.9Z" fill="#222"/><path d="M1215.6999999999998 305.8H1218.5V309.4H1215.6999999999998ZM1214.8 309.5H1219.3999999999999M1217.1 309.6V311.6" fill="none" stroke="#333" stroke-width="0.9"/><path d="M1218.0 305.8V309.4" stroke="#333" stroke-width="1"/><path d="M1226.1000000000001 306.9L1231.3 312.1M1231.3 306.9L1226.1000000000001 312.1" stroke="#111" stroke-width="1.3"/>
<path d="M292.2 120.10000000000001L297.40000000000003 125.3M297.40000000000003 120.10000000000001L292.2 125.3" stroke="#111" stroke-width="1.3"/>
<path d="M438.59999999999997 120.10000000000001L443.8 125.3M443.8 120.10000000000001L438.59999999999997 125.3" stroke="#111" stroke-width="1.3"/>
<path d="M983.2 119.3H988.8" stroke="#111" stroke-width="1.1"/><path d="M983.2 121.5H988.8L986 124.3Z" fill="#111"/>
<path d="M983.9000000000001 518.5999999999999H989.5" stroke="#111" stroke-width="1.1"/><path d="M983.9000000000001 520.8H989.5L986.7 523.5999999999999Z" fill="#111"/>
<path d="M220.9 155.8L223.5 153.2L226.1 155.8" stroke="#444" stroke-width="1.1" fill="none"/>
<path d="M220.9 379.2L223.5 381.8L226.1 379.2" stroke="#444" stroke-width="1.1" fill="none"/>
<path d="M1227.9 155.8L1230.5 153.2L1233.1 155.8" stroke="#444" stroke-width="1.1" fill="none"/>
<path d="M1227.9 276.7L1230.5 279.3L1233.1 276.7" stroke="#444" stroke-width="1.1" fill="none"/>
<path d="M1008.3 288.4L1005.7 291L1008.3 293.6" stroke="#444" stroke-width="1.1" fill="none"/>
<path d="M1214.5 288.4L1217.1 291L1214.5 293.6" stroke="#444" stroke-width="1.1" fill="none"/>
<path d="M12 395.2L16.2 399.8H13.6V404.4H10.4V399.8H7.8Z" fill="#3a96e8" stroke="#2a7cd0" stroke-width="0.5"/>
</svg>
<svg style="left:0;top:0" width="1240" height="520" viewBox="0 0 1240 520">
<rect x="235" y="131" width="761" height="1" fill="#454545"/><rect x="235" y="507" width="761" height="1" fill="#404040"/>
<path d="M593.1 219.5L520.1 286.3" stroke="#2f86c6" stroke-width="1.25" fill="none"/>
<path d="M508.0 297.4L517.2 283.2L523.0 289.5Z" fill="#2f86c6"/>
<path d="M605.8 221.2L585.1 281.7" stroke="#2f86c6" stroke-width="1.25" fill="none"/>
<path d="M579.8 297.2L581.1 280.3L589.1 283.1Z" fill="#2f86c6"/>
<path d="M620.2 222.2L643.8 281.7" stroke="#2f86c6" stroke-width="1.25" fill="none"/>
<path d="M649.8 296.9L639.8 283.2L647.7 280.1Z" fill="#2f86c6"/>
<path d="M630.8 219.0L708.0 286.4" stroke="#2f86c6" stroke-width="1.25" fill="none"/>
<path d="M720.3 297.2L705.2 289.6L710.7 283.2Z" fill="#2f86c6"/>
<path d="M477.9 335.6L440.5 400.2" stroke="#2f86c6" stroke-width="1.25" fill="none"/>
<path d="M432.3 414.4L436.8 398.1L444.2 402.3Z" fill="#2f86c6"/>
<path d="M496.2 334.6L518.6 398.9" stroke="#2f86c6" stroke-width="1.25" fill="none"/>
<path d="M524.0 414.4L514.6 400.3L522.6 397.5Z" fill="#2f86c6"/>
<path d="M649.6 335.1L623.3 399.2" stroke="#2f86c6" stroke-width="1.25" fill="none"/>
<path d="M617.1 414.4L619.4 397.6L627.3 400.8Z" fill="#2f86c6"/>
<path d="M668.0 334.7L702.8 401.1" stroke="#2f86c6" stroke-width="1.25" fill="none"/>
<path d="M710.4 415.6L699.0 403.0L706.6 399.1Z" fill="#2f86c6"/>
<path d="M752.2 335.6L792.0 400.4" stroke="#2f86c6" stroke-width="1.25" fill="none"/>
<path d="M800.6 414.4L788.4 402.6L795.6 398.2Z" fill="#2f86c6"/>
<use href="#person" x="356.7" y="188.7" width="30" height="29.5"/>
<use href="#person" x="596.8" y="186.4" width="30" height="29.5"/>
<use href="#person" x="760.8" y="177.8" width="30" height="29.5"/>
<use href="#person" x="473.9" y="299.8" width="30" height="29.5"/>
<use href="#person" x="558.6" y="299.8" width="30" height="29.5"/>
<use href="#person" x="642.4" y="299.8" width="30" height="29.5"/>
<use href="#person" x="705.1" y="420.2" width="30" height="29.5"/>
<use href="#company" x="838.8" y="179.4" width="30" height="28.4"/>
<use href="#company" x="725.5" y="299.8" width="30" height="28.4"/>
<use href="#company" x="407.3" y="418.4" width="30" height="28.4"/>
<use href="#company" x="514.8" y="418.4" width="30" height="28.4"/>
<use href="#company" x="595.0" y="418.4" width="30" height="28.4"/>
<use href="#company" x="797.1" y="418.4" width="30" height="28.4"/>
<g transform="translate(917.4,181.2)"><path d="M15 1.2 C16.6 1.2 17.3 2.4 17 3.8 C21.5 5.2 23.2 9.5 23.6 14 C24 18 25.5 19.8 28 21.2 C29.6 22.2 29.2 24.6 27 24.8 H3 C0.8 24.6 0.4 22.2 2 21.2 C4.5 19.8 6 18 6.4 14 C6.8 9.5 8.5 5.2 13 3.8 C12.7 2.4 13.4 1.2 15 1.2Z" fill="none" stroke="#f0480a" stroke-width="2.4" stroke-linejoin="round"/><path d="M10.9 25.6 H19.1 Q18.3 29.7 15 29.7 Q11.7 29.7 10.9 25.6Z" fill="#f0480a"/></g>
<g><path d="M336 290.5 Q331.6 296 331 304 L353 304.4 Q355.2 297 354.5 291 L349.2 287.3 L341 288.6Z" fill="#2a2b30"/><path d="M341.3 288 L348.2 285.4 L345.2 292.6Z" fill="#c9d4de"/><path d="M344.3 288.6 L345.6 288.2 L345.8 294 L344.6 294Z" fill="#3a3e48"/><ellipse cx="343.7" cy="282.3" rx="3.1" ry="4.3" fill="#bd8d68"/><path d="M339.6 280.5 Q339 274 343.8 273.8 Q348.6 274 348 280 Q347 277.6 343.8 277.8 Q340.8 277.6 339.6 280.5Z" fill="#141418"/><path d="M341 281.2H346.6" stroke="#3a2c28" stroke-width="1"/><path d="M333 300.5 Q342 303.5 352.5 298.5" stroke="#44474e" stroke-width="1.4" fill="none"/><ellipse cx="341.8" cy="302.6" rx="1.6" ry="0.9" fill="#bd8d68"/></g>
</svg>
<div class="nl" style="left:372.5px;top:218.6px">Ivanov Ivan</div>
<div class="nl" style="left:612.8px;top:216.8px">Ivanov Ivan</div>
<div class="nl" style="left:776px;top:207.6px">Person</div>
<div class="nl" style="left:853.8px;top:209.2px">Company</div>
<div class="nl" style="left:932.6px;top:212.2px">Event</div>
<div class="nl" style="left:343.3px;top:305.5px">Petrov Petr</div>
<div class="nl" style="left:489.3px;top:329.6px">Petrov Petr</div>
<div class="nl" style="left:574.6px;top:329.6px">Sergeev Sergey</div>
<div class="nl" style="left:657.4px;top:329.6px">Dmitriev Dmitry</div>
<div class="nl" style="left:740.5px;top:329.6px">NeoAxis</div>
<div class="nl" style="left:422.3px;top:448.2px">NeoAxis 2</div>
<div class="nl" style="left:529.8px;top:448.2px">NeoAxis 3</div>
<div class="nl" style="left:610px;top:448.2px">NeoAxis 4</div>
<div class="nl" style="left:720.3px;top:450.4px">Dmitriev Dmitry 2</div>
<div class="nl" style="left:812.1px;top:448.2px">NeoAxis 5</div>
<svg style="left:0;top:0" width="1240" height="520" viewBox="0 0 1240 520">
<circle cx="926.1" cy="142.6" r="7.6" fill="#bdbdbd" stroke="#424242" stroke-width="0.9"/>
<rect x="922.0" y="139.4" width="8.2" height="5.6" fill="#d0d0d0" stroke="#3a3a3a" stroke-width="1"/><path d="M925.3000000000001 145.2V146.6M926.9 145.2V146.6M923.7 146.79999999999998H928.5" stroke="#3a3a3a" stroke-width="0.9" fill="none"/>
<circle cx="945.5" cy="142.6" r="7.6" fill="#bdbdbd" stroke="#424242" stroke-width="0.9"/>
<circle cx="945.5" cy="142.6" r="1.8" fill="#2a2a2a"/>
<path d="M948.60 142.60L950.90 142.60" stroke="#4a4a4a" stroke-width="1.05"/>
<path d="M947.69 144.79L949.32 146.42" stroke="#4a4a4a" stroke-width="1.05"/>
<path d="M945.50 145.70L945.50 148.00" stroke="#4a4a4a" stroke-width="1.05"/>
<path d="M943.31 144.79L941.68 146.42" stroke="#4a4a4a" stroke-width="1.05"/>
<path d="M942.40 142.60L940.10 142.60" stroke="#4a4a4a" stroke-width="1.05"/>
<path d="M943.31 140.41L941.68 138.78" stroke="#4a4a4a" stroke-width="1.05"/>
<path d="M945.50 139.50L945.50 137.20" stroke="#4a4a4a" stroke-width="1.05"/>
<path d="M947.69 140.41L949.32 138.78" stroke="#4a4a4a" stroke-width="1.05"/>
<circle cx="964.8" cy="142.6" r="7.6" fill="#bdbdbd" stroke="#424242" stroke-width="0.9"/>
<circle cx="964.8" cy="142.6" r="1.8" fill="#2a2a2a"/>
<path d="M967.90 142.60L970.20 142.60" stroke="#4a4a4a" stroke-width="1.05"/>
<path d="M966.99 144.79L968.62 146.42" stroke="#4a4a4a" stroke-width="1.05"/>
<path d="M964.80 145.70L964.80 148.00" stroke="#4a4a4a" stroke-width="1.05"/>
<path d="M962.61 144.79L960.98 146.42" stroke="#4a4a4a" stroke-width="1.05"/>
<path d="M961.70 142.60L959.40 142.60" stroke="#4a4a4a" stroke-width="1.05"/>
<path d="M962.61 140.41L960.98 138.78" stroke="#4a4a4a" stroke-width="1.05"/>
<path d="M964.80 139.50L964.80 137.20" stroke="#4a4a4a" stroke-width="1.05"/>
<path d="M966.99 140.41L968.62 138.78" stroke="#4a4a4a" stroke-width="1.05"/>
<circle cx="984.3" cy="142.6" r="7.6" fill="#bdbdbd" stroke="#424242" stroke-width="0.9"/>
<rect x="980.0" y="139.6" width="6" height="6" rx="0.6" fill="#3c3c3c"/><path d="M985.9 142.6L989.3 139.6V145.6Z" fill="#3c3c3c"/>
</svg>
</body></html>
